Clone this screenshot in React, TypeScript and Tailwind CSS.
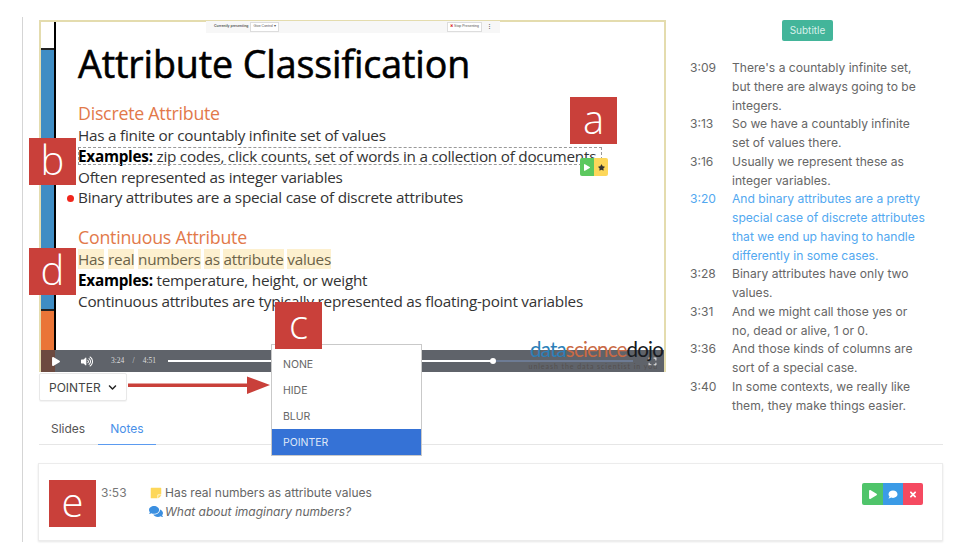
import React from 'react';
import {
  FaPlay,
  FaVolumeUp,
  FaExpand,
  FaChevronDown,
  FaStar,
  FaComment,
  FaComments,
  FaTimes,
  FaStickyNote,
} from 'react-icons/fa';

const subtitles = [
  { time: '3:09', text: "There's a countably infinite set, but there are always going to be integers." },
  { time: '3:13', text: 'So we have a countably infinite set of values there.' },
  { time: '3:16', text: 'Usually we represent these as integer variables.' },
  { time: '3:20', text: 'And binary attributes are a pretty special case of discrete attributes that we end up having to handle differently in some cases.', active: true },
  { time: '3:28', text: 'Binary attributes have only two values.' },
  { time: '3:31', text: 'And we might call those yes or no, dead or alive, 1 or 0.' },
  { time: '3:36', text: 'And those kinds of columns are sort of a special case.' },
  { time: '3:40', text: 'In some contexts, we really like them, they make things easier.' },
];

const Badge: React.FC<{ letter: string; className: string }> = ({ letter, className }) => (
  <div className={`absolute w-[47px] h-[47px] bg-[#c9403a] text-white flex items-center justify-center text-[40px] leading-none font-['Open_Sans',sans-serif] font-light pb-1 ${className}`}>
    {letter}
  </div>
);

const Mark: React.FC<{ children: React.ReactNode }> = ({ children }) => (
  <span className="bg-[#fdf0cf] text-[#6b6248]">{children}</span>
);

const Slide: React.FC = () => (
  <div className="flex-1 flex min-h-0 bg-white">
    <div className="w-[13px] flex flex-col border-r-[2px] border-black shrink-0 box-content">
      <div className="h-[28px] border-b-[2px] border-[#222] bg-white" />
      <div className="h-[261px] border-b-[2px] border-[#222] bg-[#3f8dc4]" />
      <div className="flex-1 bg-[#ea7537]" />
    </div>
    <div className="pl-[22px] pt-[17px] text-[15.3px] leading-[20.8px] text-[#333] font-['Open_Sans',sans-serif] whitespace-nowrap tracking-[-0.25px]">
      <h1 className="text-[37.6px] leading-[50px] text-black font-normal tracking-[-0.1px] [-webkit-text-stroke:0.6px_black]">Attribute Classification</h1>
      <p className="mt-[13px] text-[17.8px] leading-[23px] text-[#e2794a]">Discrete Attribute</p>
      <p>Has a finite or countably infinite set of values</p>
      <p className="relative"><b className="text-black">Examples:</b> zip codes, click counts, set of words in a collection of documents
        <span className="absolute left-0 top-[1px] w-[524px] h-[18px] border border-dashed border-[#999]" />
      </p>
      <p>Often represented as integer variables</p>
      <p className="relative">
        <span className="absolute -left-[11px] top-[8px] w-[7px] h-[7px] rounded-full bg-[#f0261c]" />
        Binary attributes are a special case of discrete attributes
      </p>
      <p className="mt-[18px] text-[17.8px] leading-[23px] text-[#e2794a]">Continuous Attribute</p>
      <p><Mark>Has</Mark> <Mark>real</Mark> <Mark>numbers</Mark> <Mark>as</Mark> <Mark>attribute</Mark> <Mark>values</Mark></p>
      <p><b className="text-black">Examples:</b> temperature, height, or weight</p>
      <p>Continuous attributes are typically represented as floating-point variables</p>
    </div>
  </div>
);

const ControlBar: React.FC = () => (
  <div className="relative h-[22px] flex items-center bg-[#5f636a] text-white shrink-0">
    <div className="absolute left-0 top-0 bottom-0 w-[14px] bg-[#6d4a40]" />
    <FaPlay className="relative ml-[11px] w-[8px] h-[9px]" />
    <FaVolumeUp className="ml-[21px] w-[12px] h-[11px]" />
    <span className="ml-[18px] w-[45px] shrink-0 flex justify-between text-[7.5px] font-['Liberation_Serif',serif] text-[#ddd] whitespace-nowrap">
      <span>3:24</span><span>/</span><span>4:51</span>
    </span>
    <div className="ml-[12px] w-[325px] h-[2px] bg-white" />
    <div className="w-[6px] h-[6px] rounded-full bg-white -ml-[3px]" />
    <div className="w-[137px] h-[2px] bg-[#6d7b94]" />
    <FaExpand className="ml-[15px] w-[9px] h-[9px] text-[#ddd]" />
  </div>
);

const Video: React.FC = () => (
  <div className="relative h-[352px] flex flex-col border-t-2 border-x-2 border-[#e4dcae]">
    <Slide />
    <ControlBar />
    {/* presenter toolbar */}
    <div className="absolute left-[165px] -top-[1px] w-[294px] h-[12px] bg-[#f7f7f7] flex items-center text-[3.5px] text-[#555] px-[8px] font-['Liberation_Sans',sans-serif] whitespace-nowrap">
      <span className="font-bold">Currently presenting</span>
      <span className="ml-[2px] bg-white border border-[#ddd] px-[2px] py-[1px]">Give Control ▾</span>
      <span className="ml-auto bg-white border border-[#ddd] px-[2px] py-[1px]"><span className="text-[#d33]">✖</span> Stop Presenting</span>
      <span className="ml-[5px] text-[5px] font-bold">⋮</span>
    </div>
    {/* logo over the bar */}
    <div className="absolute right-[1px] top-[317px] w-[140px] text-right font-['Lato',sans-serif] font-normal text-[20.5px] leading-[21px] tracking-[-0.8px] whitespace-nowrap">
      <span className="text-[#2b7fb8]">data</span><span className="text-[#c96a45]">science</span><span className="text-[#171a20]">dojo</span>
      <div className="text-[7px] leading-[7px] mt-[3px] mr-[5px] tracking-[0.95px] text-[#54504f] font-normal">unleash the data scientist in you</div>
    </div>
    <div className="absolute right-[56px] top-[136px] flex h-[18px] rounded-[2px] overflow-hidden text-[7px]">
      <div className="w-[14px] bg-[#5cc85e] text-white flex items-center justify-center"><FaPlay className="w-[6px] h-[7px]" /></div>
      <div className="w-[14px] bg-[#fdd75a] text-[#333] flex items-center justify-center"><FaStar className="w-[7px] h-[7px]" /></div>
    </div>
  </div>
);

const App: React.FC = () => {
  return (
    <div className="relative w-[966px] h-[552px] overflow-hidden bg-white font-['Inter',sans-serif] text-[#555]">
      <div className="absolute left-[22px] top-[17px] h-[525px] w-[1px] bg-[#d5d5d5]" />

      <div className="pl-[39px] pt-[20px]">
        <div className="flex">
          <div className="w-[627px] shrink-0">
            <Video />
            <div className="mt-[1px] w-[88px] h-[28px] pt-[1px] bg-white border border-[#e8e8e8] rounded-[2px] shadow-[0_1px_1px_rgba(0,0,0,0.05)] flex items-center pl-[9px] text-[12px] text-[#444]">
              POINTER
              <FaChevronDown className="ml-[7px] w-[9px] h-[9px] text-[#222]" />
            </div>
          </div>

          <div className="w-[252px] ml-[24px]">
            <button className="ml-[92px] block w-[51px] h-[21px] bg-[#43b59a] rounded-[2px] text-[10px] text-[#d8f0ea]">Subtitle</button>
            <div className="mt-[18px] text-[12.1px] leading-[18.75px]">
              {subtitles.map((s) => (
                <div key={s.time} className={`flex ${s.active ? 'text-[#52a8f0]' : 'text-[#666]'}`}>
                  <span className="w-[42px] shrink-0">{s.time}</span>
                  <span className="w-[196px]">{s.text}</span>
                </div>
              ))}
            </div>
          </div>
        </div>
      </div>

      {/* tabs and notes, below the video */}
      <div className="absolute left-[39px] top-[415px] w-[904px]">
        <div className="flex h-[30px] border-b border-[#e6e6e6] text-[12px]">
          <div className="px-[12px] pt-[5px] text-[#555]">Slides</div>
          <div className="ml-[1px] px-[12px] pt-[5px] text-[#4a90e8] border-b border-[#5b9bf0] h-[30px]">Notes</div>
        </div>
        <div className="mt-[18px] -ml-[1px] h-[78px] border border-[#ececec] shadow-[0_1px_2px_rgba(0,0,0,0.1)] flex items-start pl-[62px] pt-[19px] text-[12px] leading-[19px] text-[#666]">
          <span className="w-[49px] shrink-0 text-[#777]">3:53</span>
          <div>
            <div className="flex items-center">
              <FaStickyNote className="w-[12px] h-[12px] text-[#fdd75a] mr-[3px] shrink-0" />
              Has real numbers as attribute values
            </div>
            <div className="flex items-center italic -ml-[1px]">
              <FaComments className="w-[14px] h-[13px] text-[#3b8fe0] mr-[2px] shrink-0" />
              What about imaginary numbers?
            </div>
          </div>
          <div className="ml-auto mr-[19px] flex h-[22px] rounded-[2px] overflow-hidden text-white">
            <div className="w-[21px] bg-[#4fc46a] flex items-center justify-center"><FaPlay className="w-[8px] h-[9px]" /></div>
            <div className="w-[20px] bg-[#3b9be6] flex items-center justify-center"><FaComment className="w-[10px] h-[9px]" /></div>
            <div className="w-[20px] bg-[#f54a61] flex items-center justify-center"><FaTimes className="w-[8px] h-[9px]" /></div>
          </div>
        </div>
      </div>

      {/* dropdown menu */}
      <div className="absolute left-[271px] top-[344px] w-[151px] h-[112px] overflow-hidden bg-white border border-[#c9c9c9] text-[10.5px] text-[#666]">
        <div className="h-[26px] pl-[11px] pt-[2px] flex items-center mt-[6px]">NONE</div>
        <div className="h-[26px] pl-[11px] pt-[2px] flex items-center">HIDE</div>
        <div className="h-[26px] pl-[11px] pt-[2px] flex items-center">BLUR</div>
        <div className="h-[26px] pl-[11px] pt-[2px] flex items-center bg-[#3572d6] text-[#dfe8f8]">POINTER</div>
      </div>

      {/* arrow from select to menu */}
      <svg className="absolute left-[128px] top-[376px]" width="143" height="20" viewBox="0 0 143 20">
        <path d="M0 7.5 H119 V0.5 L142 9 L119 18 V11 H0 Z" fill="#c9403a" />
      </svg>

      <Badge letter="a" className="left-[570px] top-[97px]" />
      <Badge letter="b" className="left-[29px] top-[138px]" />
      <Badge letter="c" className="left-[275px] top-[302px]" />
      <Badge letter="d" className="left-[29px] top-[248px]" />
      <Badge letter="e" className="left-[49px] top-[480px]" />
    </div>
  );
};

export default App;
